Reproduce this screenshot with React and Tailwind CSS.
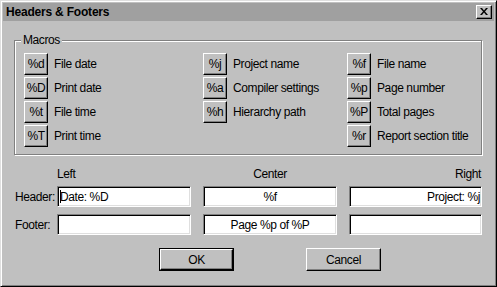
import React from "react";

const font = { fontFamily: '"Liberation Sans", Arial, sans-serif' };

function MacroBtn({ code, label }) {
  return (
    <div className="flex items-center gap-[6px] h-[22px]">
      <div className="w-[24px] h-[22px] flex items-center justify-center border border-t-white border-l-white border-r-black border-b-black shadow-[inset_-1px_-1px_0_#808080] text-[12px] tracking-[-0.4px] text-black">
        {code}
      </div>
      <span className="text-[12px] tracking-[-0.4px] text-black whitespace-nowrap">{label}</span>
    </div>
  );
}

function Field({ children, align = "left", w = "w-[134px]" }) {
  const al = align === "left" ? "justify-start pl-[2px]" : align === "center" ? "justify-center" : "justify-end pr-[1px]";
  return (
    <div className={`${w} h-[21px] bg-white flex items-center ${al} border border-t-[#808080] border-l-[#808080] border-r-white border-b-white shadow-[inset_1px_1px_0_#000,inset_-1px_-1px_0_#dfdfdf] text-[12px] tracking-[-0.4px] text-black whitespace-nowrap`}>
      {children}
    </div>
  );
}

export default function App() {
  return (
    <div style={font} className="w-[497px] h-[287px] bg-[#c0c0c0] border border-t-[#dfdfdf] border-l-[#dfdfdf] border-r-black border-b-black shadow-[inset_1px_1px_0_#fff,inset_-1px_-1px_0_#808080] p-[2px] flex flex-col">
      {/* Title bar */}
      <div className="h-[18px] bg-[#a0a0a0] flex items-center justify-between pl-[3px] pr-[2px]">
        <span className="text-[12px] font-bold tracking-[-0.2px] text-black leading-none">Headers &amp; Footers</span>
        <div className="w-[16px] h-[14px] bg-[#c0c0c0] border border-t-white border-l-white border-r-black border-b-black shadow-[inset_-1px_-1px_0_#808080] flex items-center justify-center">
          <svg width="8" height="7" viewBox="0 0 8 7" className="mb-px mr-px">
            <path d="M0 0h2l2 2.5L6 0h2L5 3.5 8 7H6L4 4.5 2 7H0l3-3.5z" fill="#000" />
          </svg>
        </div>
      </div>

      {/* Body */}
      <div className="px-[11px] flex flex-col">
        {/* Macros group */}
        <div className="relative mt-[19px] w-[468px] h-[115px] border border-[#808080] shadow-[1px_1px_0_#fff,inset_1px_1px_0_#fff]">
          <span className="absolute -top-[8px] left-[6px] bg-[#c0c0c0] px-[2px] text-[12px] tracking-[-0.4px] text-black leading-[14px]">Macros</span>
          <div className="pl-[9px] pt-[12px] grid grid-cols-[179px_144px_1fr] gap-y-[2px]">
            <MacroBtn code="%d" label="File date" />
            <MacroBtn code="%j" label="Project name" />
            <MacroBtn code="%f" label="File name" />
            <MacroBtn code="%D" label="Print date" />
            <MacroBtn code="%a" label="Compiler settings" />
            <MacroBtn code="%p" label="Page number" />
            <MacroBtn code="%t" label="File time" />
            <MacroBtn code="%h" label="Hierarchy path" />
            <MacroBtn code="%P" label="Total pages" />
            <MacroBtn code="%T" label="Print time" />
            <div />
            <MacroBtn code="%r" label="Report section title" />
          </div>
        </div>

        {/* Column labels */}
        <div className="mt-[12px] flex gap-[12px] h-[14px] text-[12px] tracking-[-0.4px] text-black leading-[14px]">
          <div className="w-[31px]" />
          <div className="w-[134px]">Left</div>
          <div className="w-[134px] text-center">Center</div>
          <div className="w-[133px] text-right pr-[1px]">Right</div>
        </div>

        {/* Header row */}
        <div className="mt-[5px] flex gap-[12px] items-center">
          <div className="w-[31px] pl-[1px] text-[12px] tracking-[-0.4px] text-black whitespace-nowrap">Header:</div>
          <Field>
            <span className="inline-block w-px h-[13px] bg-black -mr-px" />
            Date: %D
          </Field>
          <Field align="center">%f</Field>
          <Field align="right" w="w-[133px]">Project: %j</Field>
        </div>

        {/* Footer row */}
        <div className="mt-[7px] flex gap-[12px] items-center">
          <div className="w-[31px] pl-[1px] text-[12px] tracking-[-0.4px] text-black whitespace-nowrap">Footer:</div>
          <Field />
          <Field align="center">Page %p of %P</Field>
          <Field w="w-[133px]" />
        </div>

        {/* Buttons */}
        <div className="mt-[13px] flex pl-[145px] gap-[72px]">
          <div className="w-[75px] h-[23px] border border-black flex">
            <div className="flex-1 border border-t-white border-l-white border-r-black border-b-black shadow-[inset_-1px_-1px_0_#808080] flex items-center justify-center text-[12px] tracking-[-0.4px] text-black">
              OK
            </div>
          </div>
          <div className="w-[75px] h-[23px] border border-t-white border-l-white border-r-black border-b-black shadow-[inset_-1px_-1px_0_#808080] flex items-center justify-center text-[12px] tracking-[-0.4px] text-black">
            Cancel
          </div>
        </div>
      </div>
    </div>
  );
}
